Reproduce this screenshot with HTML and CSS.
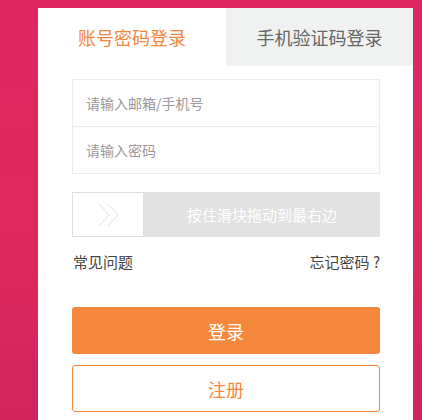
FILE: index.html
```html
<!DOCTYPE html>
<html lang="zh">
<head>
<meta charset="utf-8">
<link rel="stylesheet" href="styles.css">
</head>
<body>
<div class="card">
  <div class="tabs">
    <div class="tab active">账号密码登录</div>
    <div class="tab">手机验证码登录</div>
  </div>
  <div class="form">
    <div class="inputs">
      <div class="field">请输入邮箱/手机号</div>
      <div class="field">请输入密码</div>
    </div>
    <div class="slider">
      <div class="handle">
        <svg width="24" height="24" viewBox="0 0 24 24"><path d="M2 1 L12 12 L2 23 M11 1 L21 12 L11 23" fill="none" stroke="#e0e0e0" stroke-width="1"/></svg>
      </div>
      <div class="track">按住滑块拖动到最右边</div>
    </div>
    <div class="links">
      <span>常见问题</span>
      <span>忘记密码 ?</span>
    </div>
    <div class="btn primary">登录</div>
    <div class="btn outline">注册</div>
  </div>
</div>
</body>
</html>
```
FILE: styles.css
```css
html, body { margin: 0; padding: 0; }
body {
  width: 422px;
  height: 420px;
  overflow: hidden;
  background: linear-gradient(180deg, #df2661 0%, #e0285f 50%, #d0265c 100%);
  font-family: "Noto Sans CJK SC", "Microsoft YaHei", sans-serif;
  padding-top: 8px;
  box-sizing: border-box;
}
.card {
  margin-left: 38px;
  width: 375px;
  height: 412px;
  background: #fff;
}
.tabs {
  display: flex;
  height: 58px;
}
.tab {
  flex: 1;
  display: flex;
  align-items: center;
  justify-content: center;
  font-size: 18px;
  color: #666;
  background: #f0f2f1;
}
.tab.active {
  background: #fff;
  color: #f5883b;
  flex: 0 0 188px;
}
.form {
  padding: 13px 33px 0 34px;
}
.inputs {
  border: 1px solid #ececec;
}
.field {
  height: 46px;
  display: flex;
  align-items: center;
  padding-left: 13px;
  font-size: 14px;
  color: #999;
}
.field + .field { border-top: 1px solid #ececec; }
.slider {
  margin-top: 18px;
  display: flex;
  height: 45px;
  background: #e2e2e2;
}
.handle {
  width: 72px;
  border: 1px solid #dedede;
  background: #fff;
  display: flex;
  align-items: center;
  padding-left: 24px;
  box-sizing: border-box;
}
.track {
  flex: 1;
  display: flex;
  align-items: center;
  justify-content: center;
  color: #fff;
  font-size: 15px;
}
.links {
  display: flex;
  justify-content: space-between;
  margin-top: 15px;
  font-size: 15px;
  color: #444;
  line-height: 20px;
  padding-left: 1px;
}
.btn {
  height: 47px;
  display: flex;
  align-items: center;
  justify-content: center;
  font-size: 18px;
  border-radius: 3px;
  box-sizing: border-box;
}
.primary {
  margin-top: 35px;
  background: #f5883c;
  color: #fff;
}
.outline {
  margin-top: 11px;
  border: 1px solid #f5883b;
  color: #f5883b;
}
```
